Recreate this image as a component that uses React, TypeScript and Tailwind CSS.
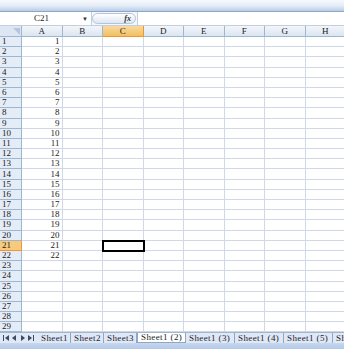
import React from "react";

const COLS = ["A", "B", "C", "D", "E", "F", "G", "H"];
const ROWS = Array.from({ length: 30 }, (_, i) => i + 1);
const TABS = ["Sheet1", "Sheet2", "Sheet3", "Sheet1 (2)", "Sheet1 (3)", "Sheet1 (4)", "Sheet1 (5)", "Sh"];

const grid = "grid grid-cols-[22px_repeat(8,40.5px)]";

function NavArrows() {
  return (
    <svg width="34" height="8" viewBox="0 0 34 8" className="text-[#3b4a66]" fill="currentColor">
      <rect x="1" y="1" width="1" height="6" />
      <path d="M7 1 L3 4 L7 7 Z" />
      <path d="M14 1 L10 4 L14 7 Z" />
      <path d="M19 1 L23 4 L19 7 Z" />
      <path d="M26 1 L30 4 L26 7 Z" />
      <rect x="31" y="1" width="1" height="6" />
    </svg>
  );
}

export default function App() {
  return (
    <div className="flex h-[349px] w-[344px] flex-col overflow-hidden bg-white font-['Liberation_Serif',serif] text-[9px] leading-none text-[#222]">
      {/* ribbon edge */}
      <div className="h-[12px] shrink-0 bg-gradient-to-b from-[#f6f9fd] via-[#e6eef8] to-[#b9cde6] border-b border-[#8ea6c7]" />

      {/* name box + formula bar */}
      <div className="flex h-[14px] shrink-0 items-center bg-[#f4f7fc] border-b border-[#c3cfe0]">
        <div className="flex h-full w-[92px] items-center border-r border-[#c3cfe0] bg-white">
          <span className="ml-[34px] text-[9px]">C21</span>
          <span className="ml-auto mr-[3px] text-[6px] text-[#333]">▼</span>
        </div>
        <div className="flex h-[11px] w-[44px] items-center justify-end rounded-full border border-[#b4c4da] bg-gradient-to-b from-[#ffffff] to-[#dfe7f2] pr-[4px]">
          <span className="text-[8px] italic font-bold text-[#333]">fx</span>
        </div>
        <div className="ml-[1px] h-full flex-1 bg-white border-l border-[#c3cfe0]" />
      </div>

      {/* column headers */}
      <div className={`${grid} h-[11px] shrink-0`}>
        <div className="flex items-end justify-end border-r border-b border-[#9eb6ce] bg-[#dde7f3] p-[1px]">
          <div className="h-0 w-0 border-l-[7px] border-t-[7px] border-l-transparent border-t-[#b5c6dc]" />
        </div>
        {COLS.map((c) => (
          <div
            key={c}
            className={
              c === "C"
                ? "flex items-center justify-center border-r border-b border-[#f29436] bg-gradient-to-b from-[#f9d99f] to-[#f1c15f]"
                : "flex items-center justify-center border-r border-b border-[#9eb6ce] bg-gradient-to-b from-[#f3f6fb] to-[#dbe5f1]"
            }
          >
            {c}
          </div>
        ))}
      </div>

      <div className="min-h-0 flex-1 overflow-hidden">
        {ROWS.map((r) => (
          <div key={r} className={`${grid} h-[10.2px]`}>
            <div
              className={
                r === 21
                  ? "flex items-center border-r border-b border-[#f29436] bg-[#f8cb7c] pl-[2px]"
                  : "flex items-center border-r border-b border-[#9eb6ce] bg-[#e4ecf7] pl-[2px]"
              }
            >
              {r < 30 ? r : null}
            </div>
            {COLS.map((c) => (
              <div
                key={c}
                className={
                  c === "C" && r === 21
                    ? "relative border-r border-b border-[#d0d7e5] outline outline-2 outline-black -outline-offset-1"
                    : "flex items-center justify-end border-r border-b border-[#d0d7e5] pr-[2px]"
                }
              >
                {c === "A" && r <= 22 ? r : null}
              </div>
            ))}
          </div>
        ))}
      </div>

      {/* sheet tabs */}
      <div className="flex h-[11px] shrink-0 items-stretch border-t border-[#9eb6ce] bg-[#dfe8f4] text-[9px] tracking-[0.4px]">
        <div className="flex w-[38px] shrink-0 items-center pl-[2px]">
          <NavArrows />
        </div>
        {TABS.map((t) => (
          <div
            key={t}
            className={
              t === "Sheet1 (2)"
                ? "flex w-[49px] shrink-0 items-center border-x border-b border-[#8ea6c7] bg-white pl-[3px]"
                : t.length > 6
                  ? "flex w-[49px] shrink-0 items-center border-r border-[#8ea6c7] pl-[3px] text-[#223]"
                  : "flex w-[33px] shrink-0 items-center border-r border-[#8ea6c7] pl-[3px] text-[#223]"
            }
          >
            {t}
          </div>
        ))}
      </div>

      {/* status strip */}
      <div className="h-[6px] shrink-0 bg-gradient-to-b from-[#c7d7ee] to-[#b2c8e6]" />
    </div>
  );
}
